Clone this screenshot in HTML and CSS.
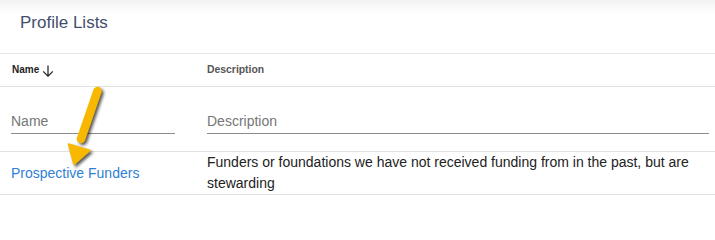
FILE: index.html
```
<!DOCTYPE html>
<html>
<head>
<meta charset="utf-8">
<link rel="stylesheet" href="styles.css">
</head>
<body>
<div class="page">
  <div class="title-bar"><h1 class="title">Profile Lists</h1></div>
  <div class="table">
    <div class="row head">
      <div class="cell name-col"><span class="th active">Name</span><svg class="sort" width="12" height="12" viewBox="0 0 12 12"><path d="M6 0.5V11M1.2 6.4L6 11.2L10.8 6.4" fill="none" stroke="#2b2b2b" stroke-width="1.3"/></svg></div>
      <div class="cell"><span class="th desc-th">Description</span></div>
    </div>
    <div class="row filter">
      <div class="cell name-col"><input class="field name-field" placeholder="Name"></div>
      <div class="cell"><input class="field desc-field" placeholder="Description"></div>
    </div>
    <div class="row data">
      <div class="cell name-col center"><a class="link" href="#">Prospective Funders</a></div>
      <div class="cell desc">Funders or foundations we have not received funding from in the past, but are stewarding</div>
    </div>
  </div>
  <svg class="annot" width="715" height="201" viewBox="0 0 715 201">
    <g class="annot-g">
      <path d="M97.5 91L81 139" fill="none" stroke="#f8b800" stroke-width="8.5" stroke-linecap="round"/>
      <polygon points="90,150.5 74,164.5 68.5,144" fill="#f8b800" stroke="#f8b800" stroke-width="1.5" stroke-linejoin="round"/>
    </g>
  </svg>
</div>
</body>
</html>
```
FILE: styles.css
```
html, body {
  margin: 0;
  padding: 0;
  background: #fff;
}
body {
  font-family: "Liberation Sans", Arial, sans-serif;
  color: #222;
}
.page {
  position: relative;
  width: 715px;
  height: 201px;
  overflow: hidden;
}
.title-bar {
  height: 54px;
  box-sizing: border-box;
  padding: 13px 0 0 20px;
  background: linear-gradient(#f3f3f3, #fff 14px);
  border-bottom: 1px solid #e6e6e6;
}
.title {
  margin: 0;
  font-size: 17px;
  line-height: 20px;
  font-weight: normal;
  color: #434e6c;
}
.row {
  display: grid;
  grid-template-columns: 196px 1fr;
  border-bottom: 1px solid #e2e2e2;
}
.cell {
  padding: 0 6px 0 11px;
  min-width: 0;
}
.name-col {
  padding-right: 11px;
}
.head {
  height: 32px;
  box-sizing: content-box;
}
.head .cell {
  display: flex;
  align-items: center;
  gap: 3px;
}
.th {
  font-size: 10px;
  font-weight: bold;
  color: #555;
  line-height: 12px;
}
.th.desc-th {
  font-size: 10.4px;
}
.th.active {
  color: #1e1e1e;
  padding-left: 1px;
}
.sort {
  display: block;
  margin-top: 2px;
}
.filter .cell {
  padding-top: 26px;
  padding-bottom: 17px;
}
.field {
  display: block;
  box-sizing: content-box;
  height: 16px;
  line-height: 16px;
  padding: 0 0 4px 0;
  margin: 0;
  border: none;
  border-bottom: 1px solid #8c8c8c;
  background: transparent;
  font-family: "Liberation Sans", Arial, sans-serif;
  font-size: 14px;
  color: #222;
  outline: none;
}
.field::placeholder {
  color: #767676;
  opacity: 1;
}
.name-field {
  width: 164px;
}
.desc-field {
  width: 100%;
}
.data .cell {
  font-size: 14px;
  line-height: 21px;
}
.center {
  display: flex;
  align-items: center;
}
.link {
  color: #2f7fd6;
  text-decoration: none;
}
.desc {
  color: #222;
}
.annot {
  position: absolute;
  left: 0;
  top: 0;
  pointer-events: none;
}
.annot-g {
  filter: drop-shadow(2px 2px 1.5px rgba(0, 0, 0, 0.65));
}
```
